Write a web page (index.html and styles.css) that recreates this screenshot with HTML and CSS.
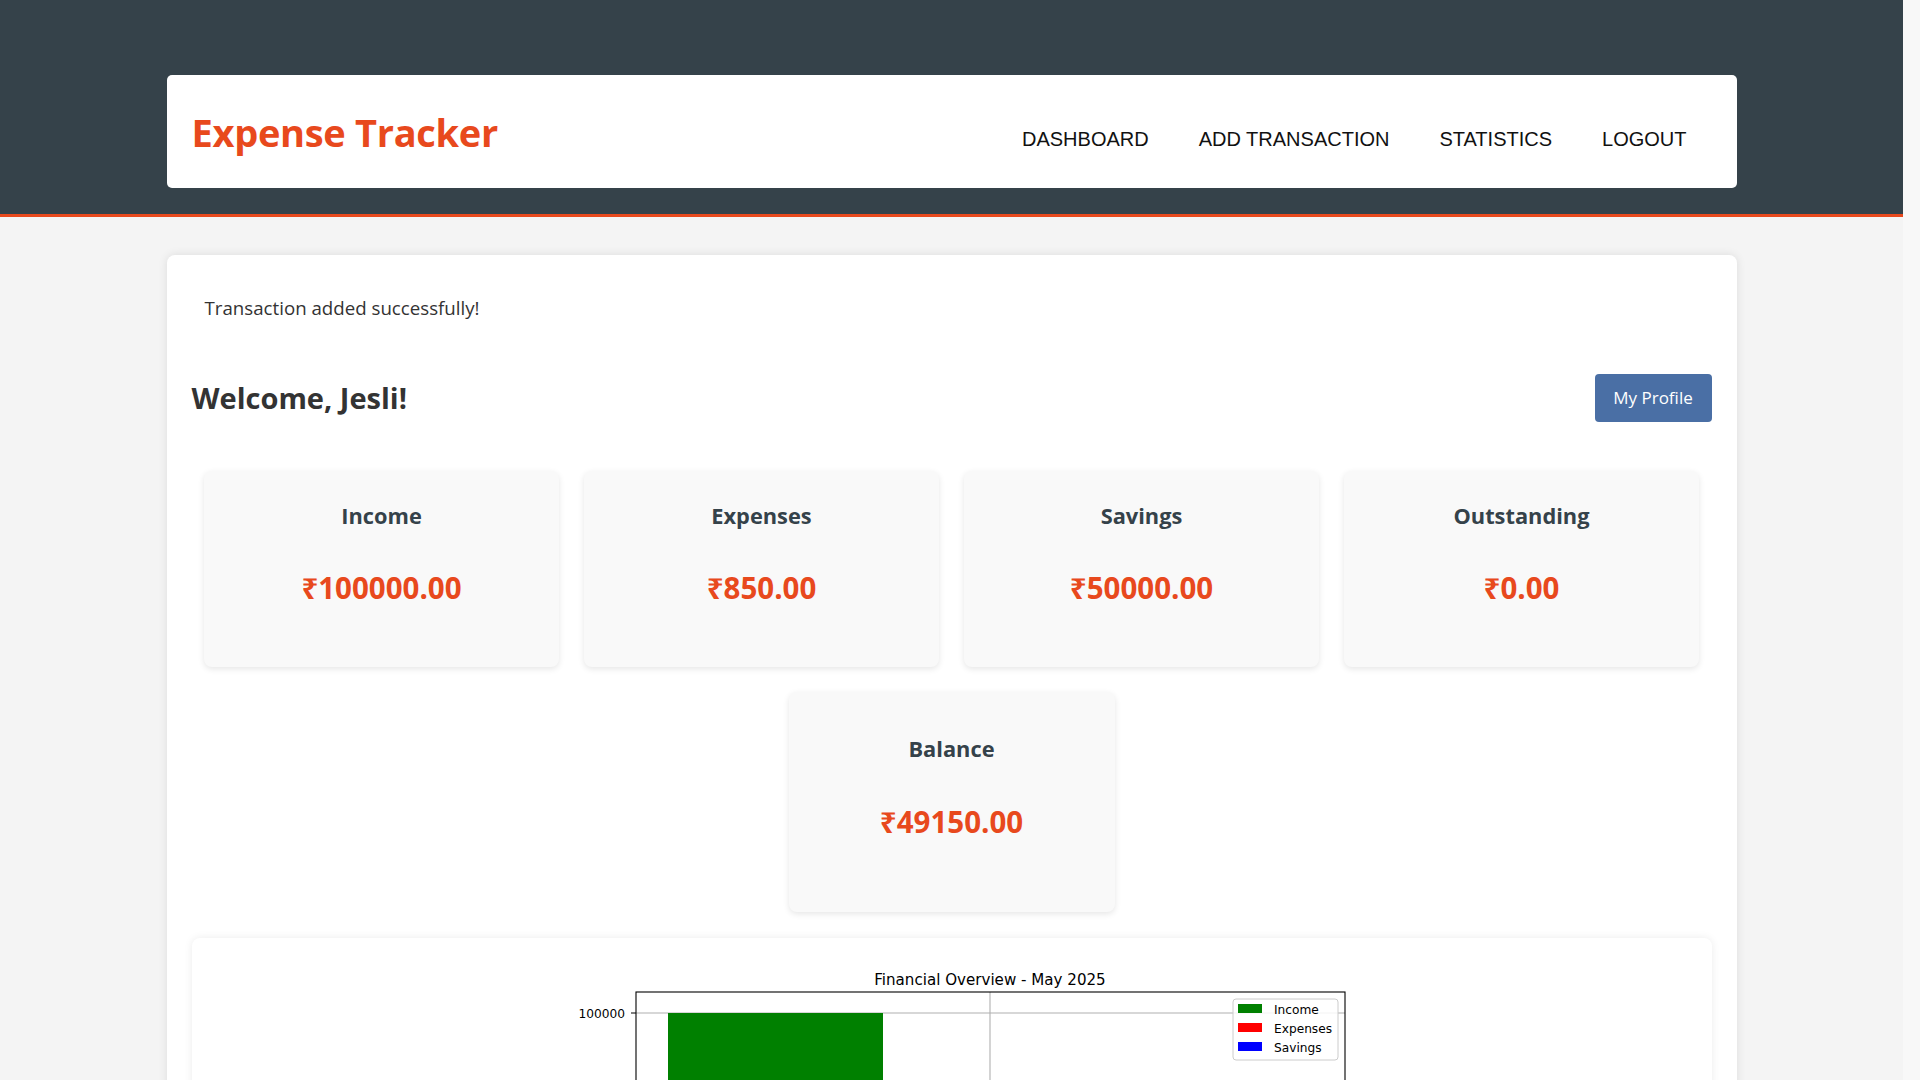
FILE: index.html
```html
<!DOCTYPE html>
<html lang="en">
<head>
<meta charset="utf-8">
<title>Expense Tracker - Dashboard</title>
<link rel="stylesheet" href="styles.css">
</head>
<body>
<header class="site-header">
  <div class="header-card">
    <h1 class="brand">Expense Tracker</h1>
    <nav class="nav">
      <a href="#" class="nav-link">DASHBOARD</a>
      <a href="#" class="nav-link">ADD TRANSACTION</a>
      <a href="#" class="nav-link">STATISTICS</a>
      <a href="#" class="nav-link">LOGOUT</a>
    </nav>
  </div>
</header>

<main class="main-card">
  <div class="message">Transaction added successfully!</div>

  <div class="welcome-row">
    <h2 class="welcome">Welcome, Jesli!</h2>
    <a href="#" class="btn-profile">My Profile</a>
  </div>

  <div class="stats-row">
    <div class="stat-card">
      <h3 class="stat-title">Income</h3>
      <p class="stat-value">₹100000.00</p>
    </div>
    <div class="stat-card">
      <h3 class="stat-title">Expenses</h3>
      <p class="stat-value">₹850.00</p>
    </div>
    <div class="stat-card">
      <h3 class="stat-title">Savings</h3>
      <p class="stat-value">₹50000.00</p>
    </div>
    <div class="stat-card">
      <h3 class="stat-title">Outstanding</h3>
      <p class="stat-value">₹0.00</p>
    </div>
  </div>

  <div class="balance-row">
    <div class="stat-card balance-card">
      <h3 class="stat-title">Balance</h3>
      <p class="stat-value">₹49150.00</p>
    </div>
  </div>

  <section class="chart-card">
    <svg class="chart" width="1521" height="520" viewBox="0 0 1521 520" xmlns="http://www.w3.org/2000/svg">
      <text class="chart-title" x="798" y="47" text-anchor="middle">Financial Overview - May 2025</text>
      <line x1="444" y1="75" x2="1153" y2="75" stroke="#b0b0b0" stroke-width="1.1"/>
      <line x1="798" y1="54" x2="798" y2="520" stroke="#b0b0b0" stroke-width="1.1"/>
      <rect x="476" y="75" width="215" height="445" fill="#008000"/>
      <rect x="444" y="54" width="709" height="480" fill="none" stroke="#000" stroke-width="1.1"/>
      <line x1="439" y1="75" x2="444" y2="75" stroke="#000" stroke-width="1.1"/>
      <text class="tick" x="433" y="80" text-anchor="end">100000</text>
      <rect x="1041" y="61" width="105" height="61" rx="3" fill="#ffffff" fill-opacity="0.85" stroke="#cccccc" stroke-width="1"/>
      <rect x="1046" y="66" width="24" height="9" fill="#008000"/>
      <rect x="1046" y="85" width="24" height="9" fill="#ff0000"/>
      <rect x="1046" y="104" width="24" height="9" fill="#0000ff"/>
      <text class="legend" x="1082" y="76">Income</text>
      <text class="legend" x="1082" y="95">Expenses</text>
      <text class="legend" x="1082" y="114">Savings</text>
    </svg>
  </section>
</main>
</body>
</html>
```

FILE: styles.css
```css
* {
  box-sizing: border-box;
}

html {
  margin: 0;
  padding: 0;
  background: #f8f8f8;
}

body {
  margin: 0 17px 0 0;
  padding: 1px 0 40px;
  background: #f4f4f4;
  font-family: "Open Sans", "Noto Sans", "DejaVu Sans", sans-serif;
  color: #333333;
}

.site-header {
  margin-top: -1px;
  background: #35424a;
  border-bottom: 3px solid #e8491d;
  padding: 75px 0 26px;
}

.header-card {
  width: 1570px;
  height: 113px;
  margin: 0 auto;
  background: #ffffff;
  border-radius: 5px;
  padding: 0 25px;
  display: flex;
  align-items: center;
  justify-content: space-between;
}

.brand {
  margin: 0;
  font-size: 38px;
  line-height: 54px;
  font-weight: 700;
  color: #e8491d;
  letter-spacing: -0.3px;
}

.nav {
  display: flex;
  margin-top: 14px;
}

.nav-link {
  font-family: "Liberation Sans", Arial, sans-serif;
  font-size: 20px;
  line-height: 24px;
  color: #111111;
  text-decoration: none;
  padding: 0 25px;
}

.main-card {
  width: 1570px;
  margin: 38px auto 0;
  background: #ffffff;
  border-radius: 8px;
  box-shadow: 0 0 10px rgba(0, 0, 0, 0.1);
  padding: 25px;
}

.message {
  padding: 16px 13px 8px;
  font-size: 18.7px;
  line-height: 24px;
  color: #333333;
}

.welcome-row {
  margin-top: 46px;
  display: flex;
  align-items: center;
  justify-content: space-between;
  height: 48px;
}

.welcome {
  margin: 0;
  font-size: 29px;
  line-height: 40px;
  font-weight: 700;
  color: #333333;
}

.btn-profile {
  display: inline-block;
  width: 117px;
  height: 48px;
  line-height: 48px;
  text-align: center;
  background: #4a6fa5;
  color: #ffffff;
  font-size: 17px;
  border-radius: 4px;
  text-decoration: none;
}

.stats-row {
  margin-top: 49px;
  display: flex;
  gap: 25px;
  padding: 0 12.5px;
}

.stat-card {
  flex: 1 1 0;
  height: 196px;
  background: #f9f9f9;
  border-radius: 8px;
  box-shadow: 0 2px 6px rgba(0, 0, 0, 0.1);
  padding: 30px 15px 0;
  text-align: center;
}

.stat-title {
  margin: 0;
  font-size: 21.8px;
  line-height: 30px;
  font-weight: 700;
  color: #35424a;
}

.stat-value {
  margin: 37px 0 0;
  font-size: 29.5px;
  line-height: 40px;
  font-weight: 700;
  color: #e8491d;
}

.balance-row {
  margin-top: 25px;
  display: flex;
  justify-content: center;
}

.balance-card {
  flex: 0 0 326px;
  height: 220px;
  padding-top: 42px;
}

.balance-card .stat-value {
  margin-top: 38px;
}

.chart-card {
  margin-top: 26px;
  background: #ffffff;
  border-radius: 8px;
  box-shadow: 0 0 8px rgba(0, 0, 0, 0.08);
  overflow: hidden;
}

.chart {
  display: block;
}

.chart-title {
  font-family: "DejaVu Sans", sans-serif;
  font-size: 15.1px;
  fill: #000000;
}

.tick,
.legend {
  font-family: "DejaVu Sans", sans-serif;
  font-size: 12.2px;
  fill: #000000;
}
```
